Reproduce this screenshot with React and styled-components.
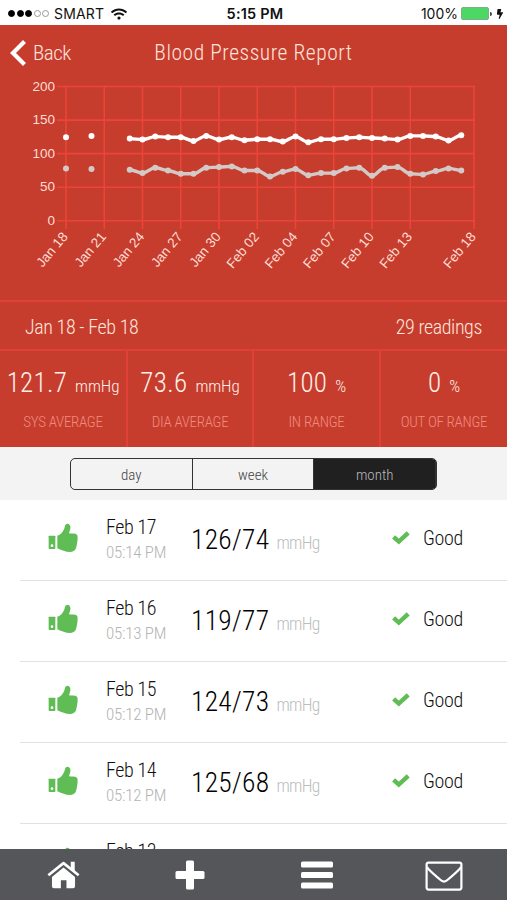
import React from "react";
import styled, { createGlobalStyle } from "styled-components";
import { FaWifi, FaBolt } from "react-icons/fa";

const DAY_WIDTH = 12.75;
const LEFT = 66;
const TOP = 86.5;
const HEIGHT = 134.3;

const ticks = [
  [0, "Jan 18"],
  [3, "Jan 21"],
  [6, "Jan 24"],
  [9, "Jan 27"],
  [12, "Jan 30"],
  [15, "Feb 02"],
  [18, "Feb 04"],
  [21, "Feb 07"],
  [24, "Feb 10"],
  [27, "Feb 13"],
  [32, "Feb 18"],
];

const single = [
  { day: 0, sys: 124.5, dia: 78 },
  { day: 2, sys: 126.4, dia: 77 },
];

const sys = [
  122.4, 121, 125.4, 124.4, 124.4, 119, 126.4, 121, 124.4, 120, 121.4, 121.4, 118, 125.4,
  117, 121.4, 121.4, 123.4, 124.4, 123.4, 122.4, 121, 126.4, 126.4, 125.4, 119.5, 127.4,
];
const dia = [
  76, 71, 79, 75, 70, 70, 79, 80, 81, 75, 75, 66, 73, 77,
  68, 71, 71, 78, 79, 67, 79, 80, 70, 69, 74, 78, 75,
];

const readings = [
  { date: "Feb 17", time: "05:14 PM", value: "126/74" },
  { date: "Feb 16", time: "05:13 PM", value: "119/77" },
  { date: "Feb 15", time: "05:12 PM", value: "124/73" },
  { date: "Feb 14", time: "05:12 PM", value: "125/68" },
  { date: "Feb 13" },
];

const stats = [
  { value: "121.7", unit: "mmHg", label: "SYS AVERAGE" },
  { value: "73.6", unit: "mmHg", label: "DIA AVERAGE" },
  { value: "100", unit: "%", label: "IN RANGE" },
  { value: "0", unit: "%", label: "OUT OF RANGE" },
];

const getX = (day) => LEFT + day * DAY_WIDTH;
const getY = (value) => TOP + HEIGHT * (1 - value / 200);

const getPoints = (values) => values.map((v, i) => [getX(i + 5), getY(v)]);

const getPath = (points) =>
  points
    .map(([x, y], i) => {
      if (i === 0) return `M${x} ${y}`;
      const [px, py] = points[i - 1];
      return `C${px + 4.5} ${py} ${x - 4.5} ${y} ${x} ${y}`;
    })
    .join(" ");

const Series = ({ values, name, color }) => {
  const points = getPoints(values);
  return (
    <g fill={color}>
      <path d={getPath(points)} fill="none" stroke={color} strokeWidth="3.4" />
      {points.map(([x, y]) => (
        <circle key={x} cx={x} cy={y} r="3" />
      ))}
      {single.map((s) => (
        <circle key={s.day} cx={getX(s.day)} cy={getY(s[name])} r="3" />
      ))}
    </g>
  );
};

const Chart = () => (
  <ChartSvg viewBox="0 80 507 220">
    <g stroke="#ec4438" strokeWidth="1.6">
      {[0, 50, 100, 150, 200].map((v) => (
        <line key={v} x1="57" x2="475" y1={getY(v)} y2={getY(v)} />
      ))}
      {ticks.map(([day]) => (
        <line key={day} x1={getX(day)} x2={getX(day)} y1={TOP} y2="229" />
      ))}
    </g>
    {[0, 50, 100, 150, 200].map((v) => (
      <AxisText key={v} x="55" y={getY(v) + 4.2}>{v}</AxisText>
    ))}
    {ticks.map(([day, label]) => (
      <AxisText key={day} transform={`translate(${getX(day) + 2.5} 237) rotate(-50)`}>
        {label}
      </AxisText>
    ))}
    <Series values={dia} name="dia" color="#d3cac8" />
    <Series values={sys} name="sys" color="#ffffff" />
  </ChartSvg>
);

const ThumbIcon = () => (
  <svg width="30" height="30" viewBox="0 0 90 90" fill="#60bd55">
    <rect x="2" y="38" width="20" height="40" rx="2" />
    <circle cx="12" cy="68" r="4" fill="#fff" />
    <path d="M28 38C38 36 44 27 48 19C51 11 51 2 59 2C67 3 69 12 66 21L63 31C72 32 81 31 87 35C91 41 88 60 84 76C81 84 74 87 66 87C52 87 42 82 28 76Z" />
  </svg>
);

const CheckIcon = () => (
  <svg width="18" height="14" viewBox="0 0 18 14" fill="none" stroke="#60bd55" strokeWidth="4.4">
    <path d="M1.6 5.8L6.8 10.6L16.2 1.8" />
  </svg>
);

const HomeIcon = () => (
  <svg width="33" height="28" viewBox="0 0 100 84" fill="#fff">
    <path d="M4 43L50 6L96 43" fill="none" stroke="#fff" strokeWidth="8" strokeLinejoin="round" />
    <path d="M72 2H84V32L72 22Z" />
    <path d="M15 48L50 19L85 48V76Q85 82 79 82H59V58H42V82H21Q15 82 15 76Z" />
  </svg>
);

const PlusIcon = () => (
  <svg width="30" height="30" viewBox="0 0 30 30" fill="#fff">
    <rect x="11" y="0.5" width="8" height="29" rx="1.5" />
    <rect x="0.5" y="11" width="29" height="8" rx="1.5" />
  </svg>
);

const MenuIcon = () => (
  <svg width="32" height="28" viewBox="0 0 32 28" fill="#fff">
    <rect y="0.5" width="32" height="6" rx="1.5" />
    <rect y="11" width="32" height="6" rx="1.5" />
    <rect y="21.5" width="32" height="6" rx="1.5" />
  </svg>
);

const MailIcon = () => (
  <svg width="38" height="32" viewBox="0 -2 38 32" fill="none" stroke="#fff" strokeWidth="2.2">
    <rect x="1.6" y="1.6" width="34.8" height="27" rx="2" />
    <path d="M2 6C3.5 9 8 12.5 15 18.5Q19 22.5 23 18.5C30 12.5 34.5 9 36 6" />
  </svg>
);

const BackIcon = () => (
  <svg width="16" height="26" viewBox="0 0 16 26" fill="none" stroke="#fff" strokeWidth="4.2">
    <path d="M14.5 1.5L3 13L14.5 24.5" />
  </svg>
);

const App = () => (
  <>
    <GlobalStyle />
    <Container>
      <StatusBar>
        <Carrier>
          <Dot $on /><Dot $on /><Dot $on /><Dot /><Dot />
          <CarrierName>SMART</CarrierName>
          <FaWifi size={16} />
        </Carrier>
        <Clock>5:15 PM</Clock>
        <Power>
          100%
          <BatteryWrap>
            <Battery />
            <BatteryTip />
          </BatteryWrap>
          <FaBolt size={10} />
        </Power>
      </StatusBar>
      <Report>
        <Header>
          <BackButton>
            <BackIcon />
            Back
          </BackButton>
          <Title>Blood Pressure Report</Title>
        </Header>
        <Chart />
        <Period>
          <span>Jan 18 - Feb 18</span>
          <span>29 readings</span>
        </Period>
        <Stats>
          {stats.map((s) => (
            <Stat key={s.label}>
              <StatValue>
                {s.value}
                <StatUnit>{s.unit}</StatUnit>
              </StatValue>
              <StatLabel>{s.label}</StatLabel>
            </Stat>
          ))}
        </Stats>
      </Report>
      <TabArea>
        <Tabs>
          <Tab>day</Tab>
          <Tab>week</Tab>
          <Tab $active>month</Tab>
        </Tabs>
      </TabArea>
      <List>
        {readings.map((r) => (
          <Row key={r.date}>
            <ThumbIcon />
            <div>
              <DateText>{r.date}</DateText>
              <TimeText>{r.time}</TimeText>
            </div>
            {r.value && (
              <>
                <Value>
                  {r.value}
                  <Unit>mmHg</Unit>
                </Value>
                <Result>
                  <CheckIcon />
                  Good
                </Result>
              </>
            )}
          </Row>
        ))}
      </List>
      <Footer>
        <HomeIcon />
        <PlusIcon />
        <MenuIcon />
        <MailIcon />
      </Footer>
    </Container>
  </>
);

export default App;

const GlobalStyle = createGlobalStyle`
  body {
    margin: 0;
    overflow: hidden;
  }
  * {
    box-sizing: border-box;
  }
`;

const Container = styled.div`
  width: 507px;
  height: 900px;
  display: flex;
  flex-direction: column;
  overflow: hidden;
  background: #fff;
  font-family: "Roboto Condensed", Roboto, sans-serif;
  font-stretch: 75%;
  font-weight: 300;
  white-space: nowrap;
`;

const StatusBar = styled.div`
  height: 25px;
  flex: none;
  display: grid;
  grid-template-columns: 1fr auto 1fr;
  align-items: center;
  padding: 2px 5px 0 8px;
  font-family: Inter, sans-serif;
  font-stretch: 100%;
  font-size: 14px;
  font-weight: 400;
  color: #111;
`;

const Carrier = styled.div`
  display: flex;
  align-items: center;
  gap: 1.6px;
`;

const Dot = styled.i`
  width: 7px;
  height: 7px;
  border-radius: 50%;
  border: 1px solid ${(props) => (props.$on ? "#000" : "#999")};
  background: ${(props) => (props.$on ? "#000" : "#fff")};
`;

const CarrierName = styled.span`
  margin: 0 5px 0 3px;
  letter-spacing: 0.2px;
`;

const Clock = styled.div`
  font-weight: 600;
  font-size: 14.5px;
  letter-spacing: 0.2px;
`;

const Power = styled.div`
  display: flex;
  align-items: center;
  justify-content: flex-end;
  gap: 3px;
  margin-right: -3px;
`;

const BatteryWrap = styled.div`
  display: flex;
  align-items: center;
  gap: 1px;
`;

const Battery = styled.div`
  width: 28px;
  height: 13px;
  border: 1px solid #7fae88;
  border-radius: 2px;
  background: #4bd864;
`;

const BatteryTip = styled.div`
  width: 2px;
  height: 4px;
  border-radius: 0 2px 2px 0;
  background: #444;
`;

const Report = styled.div`
  height: 422px;
  flex: none;
  background: #c63d2e;
  color: #ffe4dc;
`;

const Header = styled.div`
  height: 55px;
  display: grid;
  grid-template-columns: 1fr auto 1fr;
  align-items: center;
  padding: 0 10px;
`;

const BackButton = styled.div`
  display: flex;
  align-items: center;
  gap: 7px;
  font-size: 21px;
  letter-spacing: -0.5px;
`;

const Title = styled.div`
  font-size: 21.5px;
  font-weight: 350;
  letter-spacing: 0.55px;
`;

const ChartSvg = styled.svg`
  display: block;
  width: 507px;
  height: 220px;
`;

const AxisText = styled.text`
  font-family: "Liberation Sans", Arial, sans-serif;
  font-size: 13.5px;
  font-weight: 400;
  text-anchor: end;
  fill: #ffdcd3;
`;

const Period = styled.div`
  height: 49px;
  display: flex;
  align-items: center;
  justify-content: space-between;
  padding: 2px 25px 0;
  border-top: 2px solid #e04035;
  font-size: 20px;
  letter-spacing: -0.4px;
`;

const Stats = styled.div`
  height: 98px;
  display: grid;
  grid-template-columns: 128px 126px 127px 126px;
  border-top: 2px solid #e04035;
`;

const Stat = styled.div`
  display: flex;
  flex-direction: column;
  align-items: center;
  padding-top: 15px;
  border-right: 2px solid #e04035;

  &:last-child {
    border-right: 0;
  }
`;

const StatValue = styled.div`
  font-size: 27px;
  line-height: 34px;
  font-weight: 350;
  letter-spacing: 0.3px;
  color: #fff0ea;
`;

const StatUnit = styled.span`
  margin-left: 8px;
  font-size: 17px;
  font-weight: 300;
  letter-spacing: -0.1px;
`;

const StatLabel = styled.div`
  margin-top: 9px;
  font-size: 15px;
  line-height: 20px;
  letter-spacing: -0.3px;
  color: #f18b7d;
`;

const TabArea = styled.div`
  height: 53px;
  flex: none;
  display: flex;
  justify-content: center;
  padding-top: 11px;
  background: #f3f3f3;
`;

const Tabs = styled.div`
  width: 367px;
  height: 32px;
  display: flex;
  border: 1.5px solid #333;
  border-radius: 5px;
  overflow: hidden;
`;

const Tab = styled.div`
  flex: 1;
  display: flex;
  align-items: center;
  justify-content: center;
  padding-top: 2px;
  border-right: 1px solid #333;
  font-size: 15px;
  font-weight: 350;
  color: ${(props) => (props.$active ? "#bbb" : "#444")};
  background: ${(props) => (props.$active ? "#202020" : "transparent")};
`;

const List = styled.div`
  flex: 1;
  min-height: 0;
  overflow: hidden;
  padding-left: 20px;
`;

const Row = styled.div`
  height: 81px;
  display: grid;
  grid-template-columns: 58px 85px 201px 1fr;
  align-items: center;
  padding: 0 0 4px 28px;
  border-bottom: 1px solid #e2e2e2;
`;

const DateText = styled.div`
  padding-top: 2px;
  font-size: 20px;
  line-height: 26px;
  letter-spacing: -0.4px;
  color: #111;
`;

const TimeText = styled.div`
  height: 24px;
  font-size: 17px;
  line-height: 24px;
  letter-spacing: -0.25px;
  color: #b4b4b4;
`;

const Value = styled.div`
  padding-top: 2px;
  font-size: 27.5px;
  font-weight: 350;
  letter-spacing: 0.3px;
  color: #000;
`;

const Unit = styled.span`
  margin-left: 7px;
  font-size: 17.5px;
  font-weight: 300;
  letter-spacing: -0.7px;
  color: #bdbdbd;
`;

const Result = styled.div`
  display: flex;
  align-items: center;
  gap: 13px;
  font-size: 20px;
  letter-spacing: -0.3px;
  color: #111;
`;

const Footer = styled.div`
  height: 51px;
  flex: none;
  display: grid;
  grid-template-columns: repeat(4, 1fr);
  place-items: center;
  background: #555659;
`;
